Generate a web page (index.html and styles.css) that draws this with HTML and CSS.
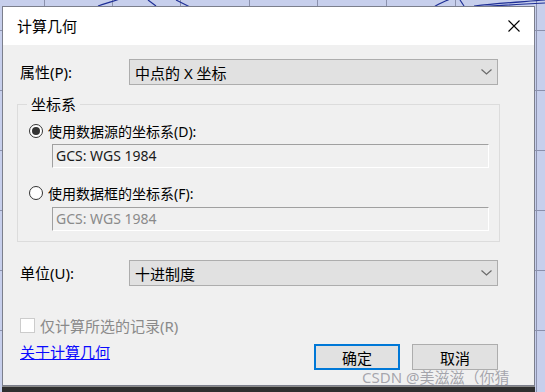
FILE: index.html
```html
<!DOCTYPE html>
<html lang="zh-CN">
<head>
    <meta charset="UTF-8">
    <title>计算几何</title>
    <link rel="stylesheet" href="styles.css">
</head>
<body>
    <div class="desk">
        <svg class="map" width="545" height="392" viewBox="0 0 545 392">
            <g stroke="#8b91ad" stroke-width="1" fill="none">
                <path d="M44.5 0V392M112.5 0V392M180.5 0V392M249.5 0V392M317.5 0V392M386.5 0V392M455.5 0V392M536.5 0V392"/>
                <path d="M0 30.5H545M0 90.5H545M0 150.5H545M0 210.5H545M0 270.5H545M0 330.5H545"/>
            </g>
            <g stroke="#1f2f96" stroke-width="1.2" fill="none">
                <path d="M98 6 C110 2 118 0 122 -2"/>
                <path d="M148 0 L156 6"/>
                <path d="M176 0 C182 3 186 5 190 7"/>
                <path d="M434 7 C440 3 446 1 452 -2"/>
                <path d="M460 0 L464 6"/>
                <path d="M474 6 C500 3 520 2 545 0"/>
                <path d="M480 7 C505 5 525 4 545 3"/>
            </g>
        </svg>

        <div class="dialog">
            <div class="titlebar">
                <span class="title">计算几何</span>
                <svg class="close" width="12" height="12" viewBox="0 0 12 12">
                    <path d="M0.5 0.5L11.5 11.5M11.5 0.5L0.5 11.5" stroke="#000" stroke-width="1.1"/>
                </svg>
            </div>

            <div class="content">
                <div class="row first">
                    <span class="lbl">属性(P):</span>
                    <div class="combo">
                        <span>中点的 X 坐标</span>
                        <svg class="chev" width="11" height="6" viewBox="0 0 11 6">
                            <path d="M0.5 0.5L5.5 5L10.5 0.5" stroke="#6a6a6a" stroke-width="1.2" fill="none"/>
                        </svg>
                    </div>
                </div>

                <fieldset class="group">
                    <legend>坐标系</legend>
                    <div class="opt">
                        <span class="radio on"></span>
                        <span>使用数据源的坐标系(D):</span>
                    </div>
                    <div class="field">GCS: WGS 1984</div>
                    <div class="opt second">
                        <span class="radio"></span>
                        <span>使用数据框的坐标系(F):</span>
                    </div>
                    <div class="field dim">GCS: WGS 1984</div>
                </fieldset>

                <div class="row unit">
                    <span class="lbl">单位(U):</span>
                    <div class="combo">
                        <span>十进制度</span>
                        <svg class="chev" width="11" height="6" viewBox="0 0 11 6">
                            <path d="M0.5 0.5L5.5 5L10.5 0.5" stroke="#6a6a6a" stroke-width="1.2" fill="none"/>
                        </svg>
                    </div>
                </div>

                <div class="checkrow">
                    <span class="check"></span>
                    <span>仅计算所选的记录(R)</span>
                </div>

                <div class="foot">
                    <a class="link" href="#">关于计算几何</a>
                    <div class="btns">
                        <button class="btn primary">确定</button>
                        <button class="btn">取消</button>
                    </div>
                </div>
            </div>
        </div>
        <div class="taskbar"></div>
        <div class="watermark">CSDN @美滋滋（你猜</div>
    </div>
</body>
</html>
```

FILE: styles.css
```css
* {
    margin: 0;
    padding: 0;
    box-sizing: border-box;
}
body {
    font-family: "Noto Sans", "Noto Sans CJK SC", sans-serif;
    font-size: 15px;
    color: #000;
    background: #c7cfec;
}
.desk {
    width: 545px;
    height: 392px;
    position: relative;
    overflow: hidden;
    background: #c7cfec;
    padding: 6px 0 0 2px;
    display: flex;
    flex-direction: column;
}
.map {
    position: absolute;
    left: 0;
    top: 0;
}
.dialog {
    position: relative;
    width: 533px;
    height: 380px;
    border: 1px solid #7c7f8c;
    background: #f0f0f0;
    display: flex;
    flex-direction: column;
}
.titlebar {
    height: 38px;
    background: #fff;
    display: flex;
    align-items: center;
    justify-content: space-between;
    padding: 0 14px 0 14px;
}
.title {
    font-size: 15px;
    line-height: 20px;
}
.content {
    flex: 1;
    padding: 14px 35px 0 17px;
    display: flex;
    flex-direction: column;
}
.row {
    display: flex;
    align-items: center;
}
.lbl {
    width: 109px;
    line-height: 20px;
}
.combo {
    width: 369px;
    height: 26px;
    background: #e1e1e1;
    border: 1px solid #adadad;
    display: flex;
    align-items: center;
    justify-content: space-between;
    padding: 0 5px 0 5px;
    font-size: 15px;
}
.chev {
    margin-right: 0;
}
.group {
    margin: 9px 0 0 -3px;
    width: 483px;
    border: 1px solid #dcdcdc;
    padding: 7px 10px 10px 9px;
}
.group legend {
    padding: 0 4px;
    line-height: 20px;
    font-size: 15px;
}
.opt {
    display: flex;
    align-items: center;
    height: 20px;
    font-size: 14px;
}
.opt.second {
    margin-top: 15px;
}
.radio {
    width: 14px;
    height: 14px;
    border-radius: 50%;
    border: 1px solid #333;
    background: #fff;
    margin: 0 5px 0 2px;
    display: flex;
    align-items: center;
    justify-content: center;
}
.radio.on::after {
    content: "";
    width: 8px;
    height: 8px;
    border-radius: 50%;
    background: #333;
}
.field {
    margin: 3px 0 0 25px;
    width: 437px;
    height: 24px;
    background: #f0f0f0;
    border-top: 1px solid #a0a0a0;
    border-left: 1px solid #a0a0a0;
    border-right: 1px solid #fff;
    border-bottom: 1px solid #fff;
    font-size: 14px;
    line-height: 21px;
    padding-left: 3px;
    color: #1a1a1a;
}
.field.dim {
    margin-top: 4px;
    color: #8a8a8a;
}
.unit {
    margin-top: 18px;
}
.checkrow {
    margin-top: 29px;
    display: flex;
    align-items: center;
    height: 20px;
    color: #8a8a8a;
}
.check {
    width: 15px;
    height: 15px;
    background: #fff;
    border: 1px solid #cccccc;
    margin-right: 5px;
}
.foot {
    margin-top: 9px;
    display: flex;
    justify-content: space-between;
    align-items: flex-start;
}
.link {
    color: #0a0aff;
    text-decoration: underline;
    line-height: 20px;
    margin-top: -2px;
}
.btns {
    display: flex;
    gap: 12px;
    margin-right: 1px;
}
.btn {
    width: 86px;
    height: 26px;
    background: #e1e1e1;
    border: 1px solid #adadad;
    font-family: "Noto Sans", "Noto Sans CJK SC", sans-serif;
    font-size: 15px;
    color: #000;
}
.btn.primary {
    border: 2px solid #0078d7;
}
.taskbar {
    position: relative;
    width: 533px;
    height: 6px;
    background: #2f2f2f;
    border-top: 1px solid #8a8a8a;
}
.watermark {
    position: absolute;
    left: 362px;
    top: 366px;
    font-size: 15px;
    color: rgba(140, 140, 150, 0.75);
    white-space: nowrap;
}
```
